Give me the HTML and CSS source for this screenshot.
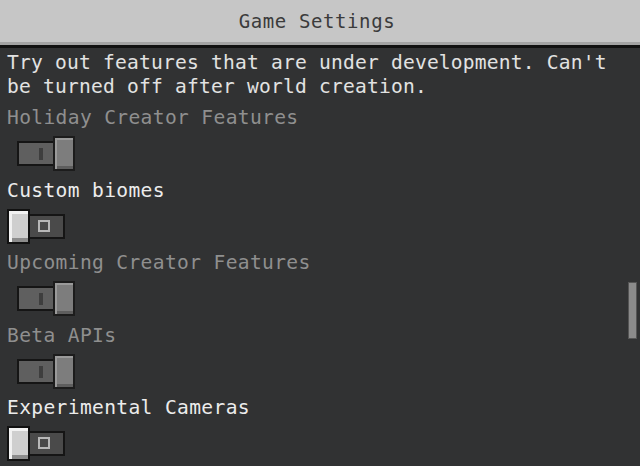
FILE: index.html
```html
<!DOCTYPE html>
<html lang="en">
<head>
  <meta charset="UTF-8">
  <meta name="viewport" content="width=device-width, initial-scale=1.0">
  <title>Game Settings</title>
  <link rel="stylesheet" href="styles.css">
</head>
<body>
  <header class="topbar">
    <h1>Game Settings</h1>
  </header>
  <main class="panel">
    <p class="intro">Try out features that are under development. Can't<br>be turned off after world creation.</p>

    <div class="row disabled">
      <span class="label">Holiday Creator Features</span>
      <div class="toggle on"><span class="track"><i class="mark-i"></i></span><span class="knob"></span></div>
    </div>

    <div class="row">
      <span class="label">Custom biomes</span>
      <div class="toggle off"><span class="knob"></span><span class="track"><i class="mark-o"></i></span></div>
    </div>

    <div class="row disabled">
      <span class="label">Upcoming Creator Features</span>
      <div class="toggle on"><span class="track"><i class="mark-i"></i></span><span class="knob"></span></div>
    </div>

    <div class="row disabled">
      <span class="label">Beta APIs</span>
      <div class="toggle on"><span class="track"><i class="mark-i"></i></span><span class="knob"></span></div>
    </div>

    <div class="row">
      <span class="label">Experimental Cameras</span>
      <div class="toggle off"><span class="knob"></span><span class="track"><i class="mark-o"></i></span></div>
    </div>

    <div class="scrollbar"></div>
  </main>
</body>
</html>
```

FILE: styles.css
```css
html, body {
  margin: 0;
  padding: 0;
  height: 100%;
  overflow: hidden;
}

body {
  font-family: 'DejaVu Sans Mono', 'Liberation Mono', monospace;
  font-size: 19.6px;
  letter-spacing: 0.2px;
  background-color: #313233;
  color: #e6e6e6;
}

.topbar {
  height: 42px;
  background-color: #c6c6c6;
  border-bottom: 3px solid #a3a3a3;
  box-shadow: 0 3px 0 #111;
  display: flex;
  align-items: center;
  justify-content: center;
}

.topbar h1 {
  margin: 0 0 0 -6px;
  font-size: 19px;
  font-weight: normal;
  color: #3b3b3b;
  letter-spacing: 0.6px;
}

.panel {
  position: relative;
  height: 418px;
  padding: 6px 0 0 7px;
  box-sizing: border-box;
}

.intro {
  margin: 0;
  line-height: 24px;
  color: #e2e2e2;
}

.row {
  display: flex;
  flex-direction: column;
  margin-top: 7px;
}

.row + .row {
  margin-top: 7.5px;
}

.label {
  line-height: 24px;
  color: #ececec;
  letter-spacing: 0.35px;
}

.row.disabled .label {
  color: #8f8f8f;
}

.toggle {
  display: flex;
  align-items: center;
  height: 35px;
  margin-top: 6px;
}

.toggle.on {
  margin-left: 10px;
}

.track {
  position: relative;
  width: 36px;
  height: 25px;
  box-sizing: border-box;
  border: 2px solid #151515;
  background-color: #4a4a4a;
}

.knob {
  width: 22px;
  height: 35px;
  box-sizing: border-box;
  border: 2px solid #111;
  background-color: #cfcfcf;
  box-shadow: inset 3px 3px 0 #f2f2f2, inset 0 -4px 0 #8c8c8c;
}

.toggle.on .track {
  background-color: #5f5f5f;
  border-right: none;
}

.toggle.on .knob {
  background-color: #7d7d7d;
  border-color: #1c1c1c;
  box-shadow: inset 2px 2px 0 #9a9a9a, inset 0 -3px 0 #5e5e5e;
}

.toggle.off .knob {
  width: 23px;
}

.toggle.off .track {
  border-left: none;
  width: 35px;
}

.mark-i {
  position: absolute;
  left: 20px;
  top: 5px;
  width: 4px;
  height: 12px;
  background-color: #3e3e3e;
}

.mark-o {
  position: absolute;
  left: 8px;
  top: 4px;
  width: 12px;
  height: 12px;
  box-sizing: border-box;
  border: 2px solid #b8b8b8;
}

.scrollbar {
  position: absolute;
  right: 3px;
  top: 237px;
  width: 9px;
  height: 57px;
  box-sizing: border-box;
  background-color: #8b8b8b;
  border: 1px solid #555;
}
```
